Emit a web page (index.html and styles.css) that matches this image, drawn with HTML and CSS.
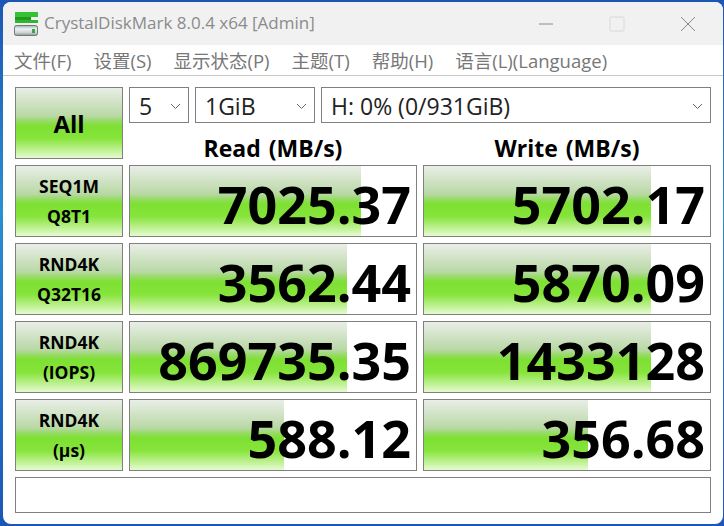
FILE: index.html
```html
<!DOCTYPE html>
<html lang="zh-CN">
<head>
    <meta charset="UTF-8">
    <meta name="viewport" content="width=device-width, initial-scale=1.0">
    <title>CrystalDiskMark</title>
    <link rel="stylesheet" href="styles.css">
</head>
<body>
    <div class="window">
        <div class="titlebar">
            <svg class="logo" width="24" height="24" viewBox="0 0 24 24">
                <defs>
                    <linearGradient id="drive" x1="0" y1="0" x2="0" y2="1">
                        <stop offset="0" stop-color="#a4aeae"/>
                        <stop offset="0.35" stop-color="#eef2f2"/>
                        <stop offset="0.7" stop-color="#cdd4d4"/>
                        <stop offset="1" stop-color="#8b9595"/>
                    </linearGradient>
                </defs>
                <rect x="1" y="0" width="23" height="5" fill="#35c235"/>
                <rect x="1" y="5" width="16" height="4" fill="#1f9a1f"/>
                <rect x="1" y="8" width="23" height="3" fill="#2fb52f"/>
                <rect x="0.5" y="13.5" width="23" height="10" rx="2" fill="url(#drive)" stroke="#6f7a7a"/>
                <rect x="18" y="17" width="3" height="4" fill="#3aa83a"/>
            </svg>
            <span class="title">CrystalDiskMark 8.0.4 x64 [Admin]</span>
            <div class="winbtns">
                <svg width="16" height="16" viewBox="0 0 16 16"><path d="M1 8h14" stroke="#8a8a8a" fill="none"/></svg>
                <svg width="16" height="16" viewBox="0 0 16 16"><rect x="1" y="1" width="14" height="14" rx="1" stroke="#d8d8d8" fill="none"/></svg>
                <svg width="16" height="16" viewBox="0 0 16 16"><path d="M1 1l14 14M15 1L1 15" stroke="#8a8a8a" fill="none"/></svg>
            </div>
        </div>
        <div class="menu">
            <span>文件(F)</span>
            <span>设置(S)</span>
            <span>显示状态(P)</span>
            <span>主题(T)</span>
            <span>帮助(H)</span>
            <span>语言(L)(Language)</span>
        </div>
        <div class="main">
            <button class="label all">All</button>
            <div class="head">
                <div class="selects">
                    <div class="combo c-count">5<svg class="chev" width="11" height="6" viewBox="0 0 11 6"><path d="M1 1l4.5 4.5L10 1" stroke="#666" fill="none"/></svg></div>
                    <div class="combo c-size">1GiB<svg class="chev" width="11" height="6" viewBox="0 0 11 6"><path d="M1 1l4.5 4.5L10 1" stroke="#666" fill="none"/></svg></div>
                    <div class="combo c-drive">H: 0% (0/931GiB)<svg class="chev" width="11" height="6" viewBox="0 0 11 6"><path d="M1 1l4.5 4.5L10 1" stroke="#666" fill="none"/></svg></div>
                </div>
                <div class="cols">
                    <div>Read (MB/s)</div>
                    <div>Write (MB/s)</div>
                </div>
            </div>

            <button class="label">SEQ1M<br>Q8T1</button>
            <div class="val"><i style="width:231px"></i><span>7025.37</span></div>
            <div class="val"><i style="width:227px"></i><span>5702.17</span></div>

            <button class="label">RND4K<br>Q32T16</button>
            <div class="val"><i style="width:217px"></i><span>3562.44</span></div>
            <div class="val"><i style="width:227px"></i><span>5870.09</span></div>

            <button class="label">RND4K<br>(IOPS)</button>
            <div class="val"><i style="width:217px"></i><span>869735.35</span></div>
            <div class="val"><i style="width:227px"></i><span>1433128</span></div>

            <button class="label">RND4K<br>(μs)</button>
            <div class="val"><i style="width:154px"></i><span>588.12</span></div>
            <div class="val"><i style="width:164px"></i><span>356.68</span></div>

            <div class="comment"></div>
        </div>
    </div>
</body>
</html>
```

FILE: styles.css
```css
html, body {
    margin: 0;
    height: 100%;
}
body {
    background: linear-gradient(180deg, #1c56b4 0%, #2b8fd0 40%, #1b56b8 100%);
    padding: 2px 1px 2px 3px;
    box-sizing: border-box;
    font-family: "Open Sans", "Noto Sans CJK SC", sans-serif;
    overflow: hidden;
}
.window {
    height: 522px;
    background: #fff;
    border-radius: 8px;
    overflow: hidden;
}
.titlebar {
    display: flex;
    align-items: center;
    height: 43px;
    padding-left: 11px;
    background: #f1f1f1;
}
.logo {
    margin-right: 6px;
}
.title {
    font-size: 17px;
    color: #8b8b8b;
    position: relative;
    top: -1px;
}
.winbtns {
    margin-left: auto;
    display: flex;
    gap: 55px;
    padding-right: 27px;
}
.menu {
    display: flex;
    gap: 22px;
    height: 30px;
    align-items: center;
    padding-left: 11px;
    font-size: 18.5px;
    color: #777;
    border-bottom: 1px solid #c8c8c8;
}
.main {
    display: grid;
    grid-template-columns: 108px 288px 288px;
    grid-template-rows: 72px 72px 72px 72px 72px 36px;
    gap: 6px;
    padding: 11px 12px 0;
}
.label {
    border: 1px solid #808080;
    padding: 0;
    background: linear-gradient(180deg, #e9eee7 0%, #b9d8a5 40%, #92dc5e 48%, #7ee033 54%, #86e43a 72%, #e6fad0 100%);
    font-family: inherit;
    font-size: 17.5px;
    font-weight: 700;
    line-height: 30px;
    color: #000;
}
.all {
    font-size: 24px;
    padding-top: 2px;
}
.head {
    grid-column: 2 / 4;
}
.selects {
    display: flex;
    gap: 6px;
    height: 36px;
}
.combo {
    box-sizing: border-box;
    display: flex;
    align-items: center;
    justify-content: space-between;
    border: 1px solid #808080;
    padding: 1px 7px 0 9px;
    font-size: 23px;
    color: #222;
}
.c-count { width: 60px; }
.c-size { width: 120px; }
.c-drive { flex: 1; }
.cols {
    display: grid;
    grid-template-columns: 288px 288px;
    gap: 6px;
    height: 36px;
    line-height: 50px;
    text-align: center;
    font-size: 23px;
    font-weight: 700;
    word-spacing: 2px;
    color: #000;
}
.val {
    position: relative;
    box-sizing: border-box;
    border: 1px solid #808080;
    background: #fff;
    text-align: right;
    padding-right: 5px;
    font-size: 52px;
    font-weight: 700;
    line-height: 76px;
    color: #000;
}
.val i {
    position: absolute;
    left: 0;
    top: 0;
    bottom: 0;
    background: linear-gradient(180deg, #e9eee7 0%, #b9d8a5 40%, #92dc5e 48%, #7ee033 54%, #86e43a 72%, #e6fad0 100%);
}
.val span {
    position: relative;
}
.comment {
    grid-column: 1 / 4;
    border: 1px solid #808080;
}
```
